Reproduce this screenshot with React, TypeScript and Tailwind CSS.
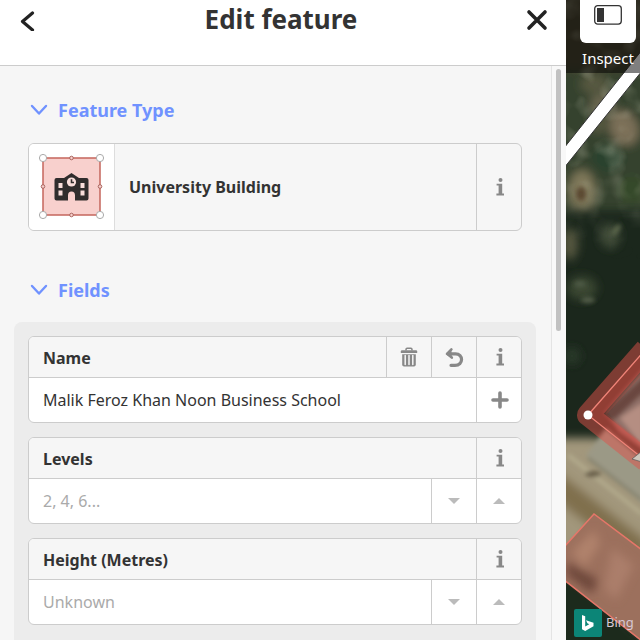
import type { ReactNode } from 'react'

const Chevron = () => (
    <svg className="w-[18px] h-3" viewBox="0 0 18 12" fill="none" stroke="currentColor" strokeWidth="2.4" strokeLinecap="round" strokeLinejoin="round">
        <path d="M2 2 L9 9.5 L16 2" />
    </svg>
)

const InfoIcon = () => (
    <svg className="w-5 h-5 ml-0.5" viewBox="0 0 20 20" fill="currentColor">
        <circle cx="10.5" cy="2.9" r="2" />
        <path d="M6.6 6.8 H12.2 V16.6 H14 V18.4 H6.4 V16.6 H8.6 V8.6 H6.6 Z" />
    </svg>
)

const TrashIcon = () => (
    <svg className="w-5 h-5" viewBox="0 0 20 20">
        <path d="M7 3.5 V2.4 Q7 1.3 8.1 1.3 H11.9 Q13 1.3 13 2.4 V3.5" fill="none" stroke="currentColor" strokeWidth="1.5" />
        <path d="M3 3.2 H17 Q18.2 3.2 18.2 4.4 V6 H1.8 V4.4 Q1.8 3.2 3 3.2 Z" fill="currentColor" />
        <path d="M3.2 7.3 H16.8 V17.8 Q16.8 19.6 15 19.6 H5 Q3.2 19.6 3.2 17.8 Z" fill="currentColor" />
        <path d="M6.2 8.5 V17.4 M10 8.5 V17.4 M13.8 8.5 V17.4" stroke="#f6f6f6" strokeWidth="1.5" strokeLinecap="round" />
    </svg>
)

const UndoIcon = () => (
    <svg className="w-5 h-5" viewBox="0 0 20 20" fill="none" stroke="currentColor">
        <path d="M4 6.8 H11.5 C19.5 6.8 19.8 18.3 11 18.3 H7" strokeWidth="3.2" strokeLinecap="round" />
        <path d="M7.4 2.4 L3 6.8 L7.8 10.6" fill="currentColor" strokeWidth="2.6" strokeLinecap="round" strokeLinejoin="round" />
    </svg>
)

const PlusIcon = () => (
    <svg className="w-5 h-5 ml-0.5" viewBox="0 0 20 20" stroke="currentColor" strokeWidth="3.6" strokeLinecap="round">
        <path d="M10 3 V17 M3 10 H17" />
    </svg>
)

const DownIcon = () => (
    <svg className="w-3 h-1.5 text-[#bbb]" viewBox="0 0 12 6" fill="currentColor"><path d="M0 0 H12 L6 6 Z" /></svg>
)

const UpIcon = () => (
    <svg className="w-3 h-1.5 text-[#bbb]" viewBox="0 0 12 6" fill="currentColor"><path d="M0 6 H12 L6 0 Z" /></svg>
)

const PresetIcon = () => (
    <svg className="w-[70px] h-[70px]" viewBox="0 0 70 70">
        <rect x="6" y="6" width="57" height="57" fill="#f8d0cd" stroke="#c5665c" strokeWidth="1.5" />
        <g fill="#f8d0cd" stroke="#a9655f">
            <circle cx="34.5" cy="6" r="1.8" />
            <circle cx="34.5" cy="63" r="1.8" />
            <circle cx="6" cy="34.5" r="1.8" />
            <circle cx="63" cy="34.5" r="1.8" />
        </g>
        <g fill="#fff" stroke="#aaa">
            <circle cx="6" cy="6" r="3.6" />
            <circle cx="63" cy="6" r="3.6" />
            <circle cx="6" cy="63" r="3.6" />
            <circle cx="63" cy="63" r="3.6" />
        </g>
        <path d="M19.5 26 H27 L34.5 21 L42 26 H49.5 Q51.5 26 51.5 28 V46.5 Q51.5 48.5 49.5 48.5 H38 V43.5 Q38 39.5 34.5 39.5 Q31 39.5 31 43.5 V48.5 H19.5 Q17.5 48.5 17.5 46.5 V28 Q17.5 26 19.5 26 Z" fill="#302d2d" />
        <circle cx="34.5" cy="30" r="4.6" fill="#f8dedb" />
        <path d="M34.5 27.3 V30.5 H37" fill="none" stroke="#302d2d" strokeWidth="1.6" />
        <path d="M21.5 31 H25.5 V36 H21.5 Z M21.5 38.5 H25.5 V43.5 H21.5 Z M43.5 31 H47.5 V36 H43.5 Z M43.5 38.5 H47.5 V43.5 H43.5 Z" fill="#f8dedb" />
    </svg>
)

const IconButton = ({ label, children }: { label: string, children: ReactNode }) => (
    <button aria-label={label} className="w-[45px] shrink-0 border-l border-[#ccc] flex items-center justify-center text-[#888]">
        {children}
    </button>
)

const SectionTitle = ({ children }: { children: ReactNode }) => (
    <h3 className="ml-3.5">
        <button className="flex items-center gap-2.5 pl-0.5 text-lg leading-7 font-bold text-[#7092ff]">
            <Chevron />
            {children}
        </button>
    </h3>
)

type FieldProps = { id: string, label: string, value?: string, placeholder?: string, tools?: ReactNode, actions: ReactNode }

const Field = ({ id, label, value, placeholder, tools, actions }: FieldProps) => (
    <div className="border border-[#ccc] rounded-md overflow-hidden bg-white">
        <div className="flex h-[41px] bg-[#f6f6f6] border-b border-[#ccc]">
            <label htmlFor={id} className="flex-1 flex items-center pl-3.5 pt-0.5 font-bold">{label}</label>
            {tools}
            <IconButton label={`About ${label}`}><InfoIcon /></IconButton>
        </div>
        <div className="flex h-11">
            <input id={id} type="text" defaultValue={value} placeholder={placeholder} className="flex-1 min-w-0 pl-3.5 outline-none placeholder:text-[#aaa]" />
            {actions}
        </div>
    </div>
)

const Stepper = () => (
    <>
        <IconButton label="Decrease"><DownIcon /></IconButton>
        <IconButton label="Increase"><UpIcon /></IconButton>
    </>
)

const Imagery = () => (
    <svg className="absolute inset-0 w-full h-full" viewBox="0 0 74 640" preserveAspectRatio="xMinYMin slice">
        <defs>
            <filter id="soft" x="-50%" y="-50%" width="200%" height="200%"><feGaussianBlur stdDeviation="5" /></filter>
            <filter id="fine" x="-50%" y="-50%" width="200%" height="200%"><feGaussianBlur stdDeviation="2" /></filter>
            <filter id="grain" x="0" y="0" width="100%" height="100%">
                <feTurbulence type="fractalNoise" baseFrequency=".05" numOctaves="2" seed="4" />
                <feColorMatrix values="0 0 0 0 .55  0 0 0 0 .55  0 0 0 0 .42  2.6 0 0 0 -1.15" />
            </filter>
            <linearGradient id="fade" x1="0" y1="0" x2="0" y2="1">
                <stop offset=".6" stopColor="#fff" />
                <stop offset="1" stopColor="#000" />
            </linearGradient>
            <mask id="canopy"><rect width="74" height="260" fill="url(#fade)" /></mask>
        </defs>
        <rect width="74" height="640" fill="#1b271c" />
        <g filter="url(#soft)">
            <rect x="-10" y="-10" width="100" height="85" fill="#46432f" />
            <rect x="-10" y="70" width="100" height="140" fill="#36422e" />
            <ellipse cx="28" cy="84" rx="14" ry="10" fill="#57583f" />
            <ellipse cx="36" cy="104" rx="12" ry="10" fill="#6a6650" />
            <ellipse cx="58" cy="128" rx="14" ry="18" fill="#7b7058" transform="rotate(-25 58 128)" />
            <ellipse cx="32" cy="124" rx="8" ry="10" fill="#565840" />
            <ellipse cx="42" cy="158" rx="16" ry="14" fill="#2b432d" />
            <ellipse cx="66" cy="190" rx="12" ry="14" fill="#35492c" />
            <ellipse cx="16" cy="190" rx="13" ry="20" fill="#7f785a" />
            <ellipse cx="4" cy="244" rx="8" ry="16" fill="#57583f" />
            <ellipse cx="44" cy="236" rx="10" ry="12" fill="#414c38" />
            <ellipse cx="16" cy="288" rx="15" ry="12" fill="#3a4632" />
            <ellipse cx="6" cy="356" rx="8" ry="8" fill="#2b3a2b" />
            <path d="M-10 438 L30 438 L90 480 V650 L-10 560 Z" fill="#a2977c" />
            <path d="M-10 470 L80 540 V570 L-10 500 Z" fill="#806f4d" />
        </g>
        <g mask="url(#canopy)">
            <rect width="74" height="260" filter="url(#grain)" opacity=".3" />
        </g>
        <g filter="url(#fine)">
            <ellipse cx="15" cy="194" rx="5" ry="7" fill="#5b4931" />
            <ellipse cx="22" cy="300" rx="7" ry="3" fill="#535d49" />
            <ellipse cx="14" cy="284" rx="6" ry="3" fill="#4e5a44" />
            <ellipse cx="50" cy="230" rx="7" ry="3" fill="#586349" transform="rotate(-50 50 230)" />
            <path d="M40 428 L78 460 V505 L20 455 Z" fill="#9b9986" />
            <path d="M22 458 L76 500" stroke="#807e6a" strokeWidth="2.5" />
            <path d="M2 455 L76 514" stroke="#b3ab8d" strokeWidth="4" />
            <ellipse cx="27" cy="474" rx="8" ry="3" fill="#675d48" />
            <path d="M-4 572 L74 642 V645 H-4 Z" fill="#1b291b" />
            <path d="M39 412 L78 368 V450 L53 432 Z" fill="#8f7067" />
            <path d="M37 414 L78 376 V392 L48 420 Z" fill="#6a463f" />
            <path d="M54 418 L78 402 V448 Z" fill="#b58e82" />
        </g>
        <path d="M80 349 L22 415 L80 461" fill="none" stroke="#e0524a" strokeOpacity=".5" strokeWidth="22" strokeLinejoin="round" />
        <path d="M22 415 L80 349 V371 L41 414 L80 445 V461 Z" fill="#e0453a" fillOpacity=".2" />
        <path d="M80 349 L22 415 L80 461" fill="none" stroke="#f08478" strokeWidth="1.3" />
        <circle cx="22" cy="415" r="4.5" fill="#fff" />
        <path d="M66 459 L76 451 V462 Z" fill="#cfc8bd" stroke="#555" strokeWidth=".7" />

        <path d="M-2 547 L28 514 L76 550 V640 H74 L-2 580 Z" fill="#9c705d" />
        <g filter="url(#soft)">
            <path d="M6 552 L28 530 L34 544 L18 568 Z" fill="#b0826c" />
            <path d="M2 562 L32 580 L26 594 L0 574 Z" fill="#6d463b" />
            <path d="M46 548 L68 565 L50 600 L38 588 Z" fill="#ab7e6a" />
        </g>
        <path d="M-2 547 L28 514 L76 550 M-2 580 L76 641" fill="none" stroke="#e57669" strokeWidth="1.5" />

        <path d="M-2 148 L80 45 V66 L-2 168 Z" fill="#fff" stroke="#333" strokeWidth="1" />
    </svg>
)

const App = () => {
    return (
        <div className="flex h-screen overflow-hidden text-base text-[#333] font-['Noto_Sans','Open_Sans',sans-serif]">
            <section className="flex-1 min-w-0 flex flex-col bg-[#f6f6f6]">
                <header className="flex justify-between h-[66px] shrink-0 pb-7 px-[18px] items-center bg-white border-b border-[#ccc]">
                    <button aria-label="Back" className="w-5 h-6 flex items-center justify-center">
                        <svg className="w-5 h-6" viewBox="0 0 20 24" fill="none" stroke="#222" strokeWidth="3.2" strokeLinecap="round" strokeLinejoin="round">
                            <path d="M14.5 6 L4.5 14.5 L14.5 23" />
                        </svg>
                    </button>
                    <h2 className="text-[26px] leading-8 font-bold">Edit feature</h2>
                    <button aria-label="Close" className="w-6 h-6 flex items-center justify-center">
                        <svg className="w-6 h-6" viewBox="0 0 24 24" stroke="#222" strokeWidth="3.6" strokeLinecap="round">
                            <path d="M5 5 L21 21 M21 5 L5 21" />
                        </svg>
                    </button>
                </header>
                <div className="flex flex-1 min-h-0">
                    <div className="flex-1 min-w-0 pl-3.5 pr-[15px] pt-[30px] overflow-hidden">
                        <SectionTitle>Feature Type</SectionTitle>
                        <div className="flex mx-3.5 mt-[19px] mb-[45px] h-22 border border-[#ccc] rounded-md overflow-hidden">
                            <button className="flex-1 flex items-stretch text-left">
                                <span className="w-[86px] flex items-center justify-center bg-white border-r border-[#ddd]"><PresetIcon /></span>
                                <span className="flex items-center pl-3.5 font-bold">University Building</span>
                            </button>
                            <IconButton label="About University Building"><InfoIcon /></IconButton>
                        </div>
                        <SectionTitle>Fields</SectionTitle>
                        <div className="mt-[18px] p-3.5 pb-20 flex flex-col gap-3.5 bg-[#ececec] rounded-lg">
                            <Field
                                id="name"
                                label="Name"
                                value="Malik Feroz Khan Noon Business School"
                                tools={<>
                                    <IconButton label="Remove"><TrashIcon /></IconButton>
                                    <IconButton label="Undo"><UndoIcon /></IconButton>
                                </>}
                                actions={<IconButton label="Add translation"><PlusIcon /></IconButton>}
                            />
                            <Field id="levels" label="Levels" placeholder="2, 4, 6..." actions={<Stepper />} />
                            <Field id="height" label="Height (Metres)" placeholder="Unknown" actions={<Stepper />} />
                        </div>
                    </div>
                    <div className="w-[15px] border-l border-[#e4e4e4] bg-[#f8f8f8] pt-[3px] pl-1">
                        <div className="w-[5px] h-[262px] rounded-full bg-[#c1c1c1]"></div>
                    </div>
                </div>
            </section>

            <aside className="relative w-[74px] shrink-0 overflow-hidden flex flex-col justify-between">
                <Imagery />
                <div className="relative h-[73px] bg-black/50 flex flex-col items-center pl-2.5">
                    <button className="flex flex-col items-center text-white text-[15px] leading-[30px]">
                        <span className="w-14 h-[43px] pt-[5px] flex justify-center bg-white rounded-b-md">
                            <svg className="w-7 h-5" viewBox="0 0 28 20">
                                <rect x=".7" y=".7" width="26.6" height="18.4" rx="3" fill="#fff" stroke="#333" strokeWidth="1.3" />
                                <rect x="3" y="3" width="7" height="14" fill="#333" />
                            </svg>
                        </span>
                        Inspect
                    </button>
                </div>
                <a href="#bing" className="relative flex items-center gap-1 pl-2 pb-[3px] text-[13px] text-[#d8c8d4]">
                    <svg className="w-7 h-7 shrink-0" viewBox="0 0 28 28">
                        <rect width="28" height="28" rx="2" fill="#0c8577" />
                        <path d="M8 6 L11.2 7.2 V17.5 L15.3 15.2 L13.4 14.2 L12 11.2 L19.5 13.8 V17.3 L11.2 22 L8 20.2 Z" fill="#fff" />
                    </svg>
                    Bing
                </a>
            </aside>
        </div>
    )
}

export default App
